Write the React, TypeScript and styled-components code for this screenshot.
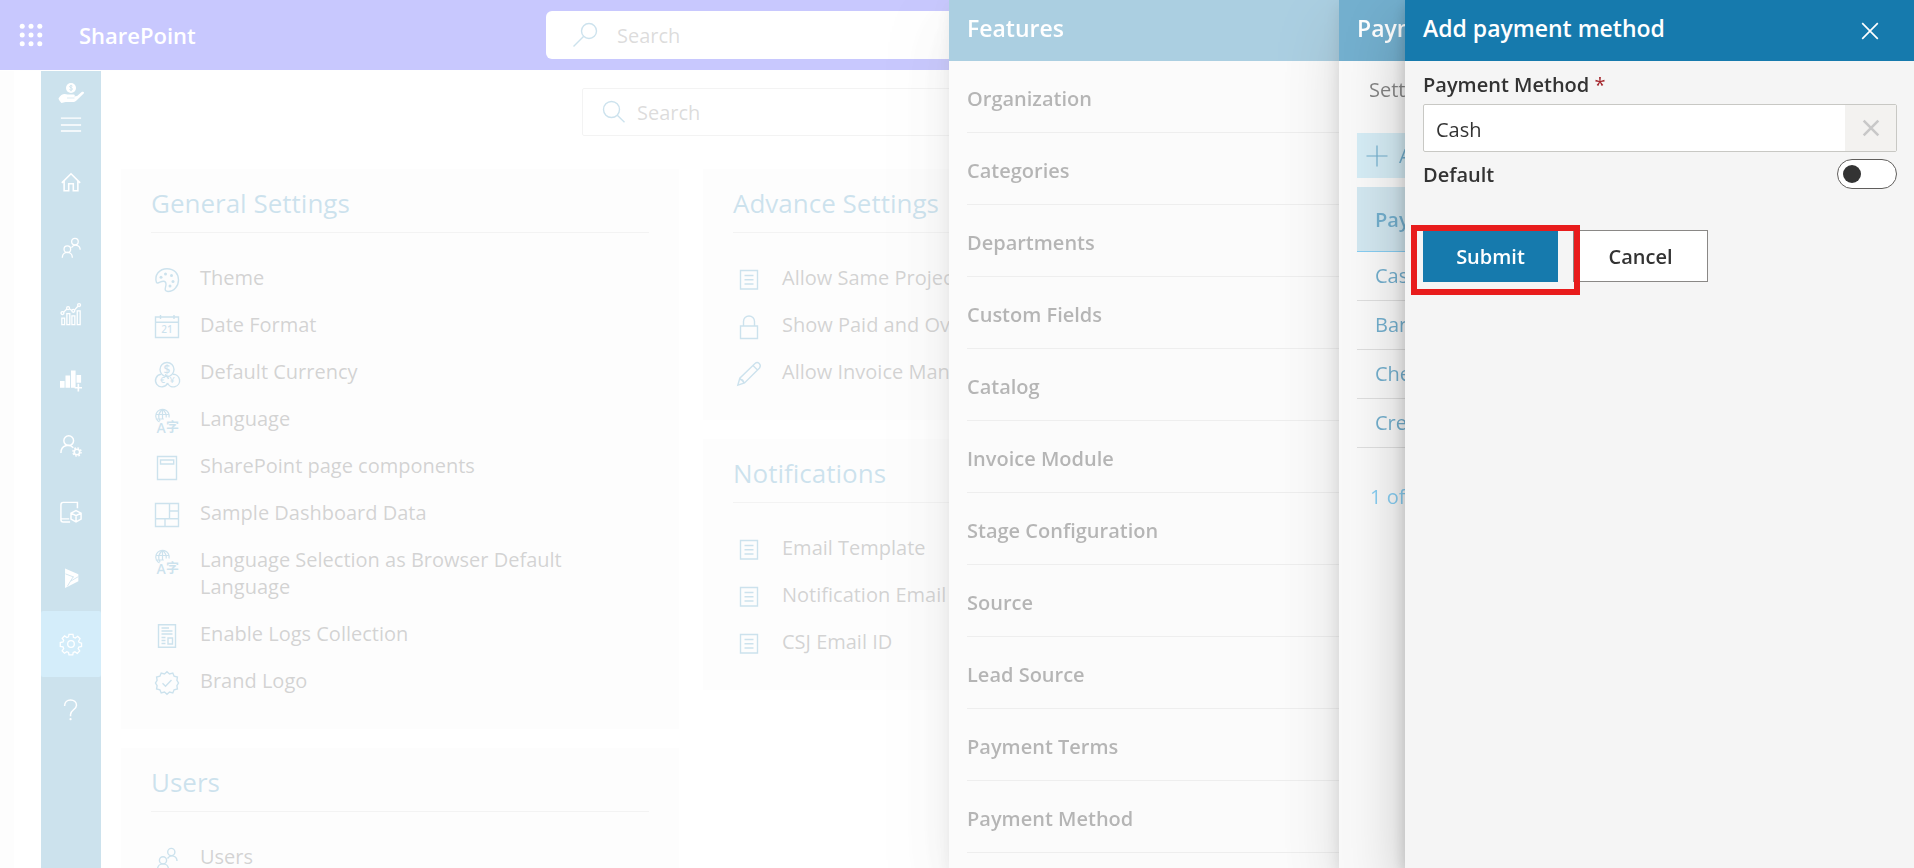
import React from "react";
import styled, { createGlobalStyle, css } from "styled-components";

const blue = "#167aad";
const sky = "#38ace8";
const ink = "#333333";
const surface = "#f5f5f5";

const GlobalStyle = createGlobalStyle`
  *, *::before, *::after { box-sizing: border-box; }
  body {
    margin: 0;
    background: #fff;
    color: ${ink};
    font-family: "Open Sans", "Noto Sans", "Liberation Sans", sans-serif;
    font-size: 20px;
    line-height: 27px;
  }
  button, input { font: inherit; color: inherit; }
  h1, h2, p, ul { margin: 0; padding: 0; }
  ul { list-style: none; }
  a { color: inherit; text-decoration: none; }
`;

/* ---------- icons ---------- */

const Svg = styled.svg<{ $size: number }>`
  display: block;
  flex: none;
  width: ${(p) => p.$size}px;
  height: ${(p) => p.$size}px;
  fill: none;
  stroke: currentColor;
  stroke-width: 1.4;
  overflow: visible;

  text {
    fill: currentColor;
    stroke: none;
    font-family: "Open Sans", "Noto Sans CJK SC", sans-serif;
    font-weight: 600;
  }
  .solid { fill: currentColor; stroke: none; }
`;

type IconName =
  | "waffle" | "hand" | "menu" | "home" | "people" | "trend" | "bars" | "userGear"
  | "product" | "dynamics" | "gear" | "help" | "searchLeft" | "searchRight"
  | "palette" | "calendar" | "currency" | "language" | "page" | "dashboard"
  | "logs" | "badge" | "note" | "lock" | "pencil" | "close" | "clear" | "plus";

const glyphs: Record<IconName, React.ReactNode> = {
  waffle: (
    <g className="solid">
      {[3.2, 12, 20.8].map((y) => [3.2, 12, 20.8].map((x) => <circle key={`${x}-${y}`} cx={x} cy={y} r="2.5" />))}
    </g>
  ),
  hand: (
    <>
      <circle className="solid" cx="12" cy="6" r="5" />
      <path d="M13.5 4.200c-.8-.8-2.900-.7-2.900.5 0 1.400 2.900.8 2.900 2.300 0 1.300-2.200 1.400-3.100.4M12 2.800v6.500" stroke="#167aad" strokeWidth=".9" />
      <path className="solid" d="M-.5 16.500C2 12.200 5 11.300 8.500 12.600h6c1.600 0 1.700 1.600.6 2l3-.6 4.600-3.900c1.600-1 3 .1 2 1.500l-7.500 7.200c-1 .9-2 1.300-3.500 1.300H6.500L2.500 21c-1.200-1-2.500-2.800-3-4.500z" />
      <path d="M8 16h7.500" stroke="#167aad" strokeWidth=".7" />
    </>
  ),
  menu: <path d="M1 4.500h22M1 12h22M1 18.500h22" strokeWidth="1.600" />,
  home: <path d="M2 13 12 3l10 10M4.500 11v10.500h5V14h5v7.500h5V11" strokeWidth="1.700" />,
  people: (
    <>
      <circle cx="16.300" cy="5" r="3.600" />
      <circle cx="8" cy="13.300" r="3.600" />
      <path d="M2.500 22.500c0-7.500 11-7.500 11 0M12.500 11.500c3-4.500 9.500-2.800 9.500 2.500" />
    </>
  ),
  trend: (
    <>
      <path d="M2 23.500v-7h3v7zM7.500 23.500V11.500h3.200v12zM13 23.500V14h3.200v9.500zM18.800 23.500V8.500H22v15z" />
      <path d="m4 10 3.500-3.500M10.500 6.500l2.500 1.700M16 7.500l3.500-4" />
      <circle cx="2.700" cy="11" r="1.600" />
      <circle cx="8.800" cy="5.600" r="1.600" />
      <circle cx="14.500" cy="8.500" r="1.600" />
      <circle cx="20.800" cy="2.200" r="1.600" />
    </>
  ),
  bars: (
    <>
      <path className="solid" d="M0 13h5v7.500H0zM6 7h5v13.500H6zM12 1.500h5v19h-5zM18 6.500h5V15h-5z" />
      <path d="M20 16v8.500M16 20.500h8" strokeWidth="1.800" />
    </>
  ),
  userGear: (
    <>
      <circle cx="9.500" cy="6.200" r="5.300" strokeWidth="1.600" />
      <path d="M1 19.500C1 10.500 10.500 9.500 14.500 14" strokeWidth="1.600" />
      <circle cx="18.500" cy="18.500" r="3" strokeWidth="1.800" />
      <circle cx="18.500" cy="18.500" r="4.500" strokeDasharray="1.800 1.734" strokeWidth="1.500" />
    </>
  ),
  product: (
    <>
      <path d="M19 8V1.500H3.500C2 1.500 1 2.500 1 4v16.500C1 22 2 23 3.500 23H11M1 19.500h9" strokeWidth="1.600" />
      <path d="m17.500 10.500 5.500 2.700v6.600l-5.500 3-5.500-3v-6.600zM12 13.200l5.500 2.800 5.500-2.800M17.500 16v6.500" strokeWidth="1.600" />
    </>
  ),
  dynamics: (
    <>
      <path className="solid" d="M5.500 1.500 20 8v7.500L5.500 23z" />
      <path d="m6 7.500 9 3.500M14.500 10.500 8 21M11.500 15.500 20 10.500" stroke="#167aad" strokeWidth=".9" />
    </>
  ),
  gear: (
    <>
      <circle cx="12" cy="12" r="3.600" />
      <path d="M9.800 1.500h4.400l.5 3.200 2 .8L19.300 3.600l2.600 2.600-1.600 2.800.7 1.300 2.500.8v3.600l-3 .6-.7 1.700 1.700 2.500-2.700 2.700-2.600-1.700-1.800.8-.5 2.600H9.800l-.5-2.700-1.900-.8-2.500 1.700-2.600-2.600 1.700-2.500-.7-1.800-3-.5V10.500l3-.7.7-1.700L2.400 5.700 5 3.200l2.500 1.700 1.800-.7z" />
    </>
  ),
  help: (
    <>
      <path d="M5 7.500C5 3.500 8 1 11.500 1S18 3.300 18 6.800c0 4.700-6.500 5.200-6.500 10v2" strokeWidth="1.600" />
      <circle className="solid" cx="11.500" cy="22" r="1.200" />
    </>
  ),
  searchLeft: (
    <>
      <circle cx="16" cy="8" r="7.500" />
      <path d="M10.500 13.500.5 23.500" />
    </>
  ),
  searchRight: (
    <>
      <circle cx="9.500" cy="9.500" r="8" />
      <path d="m15.300 15.300 7.200 7" />
    </>
  ),
  palette: (
    <>
      <path d="M1.500 14.500C-1 7 4.500.7 12 .7S23.500 6 23.500 12 19 23.500 13 23.500c-5-.5-1.800-4-2-7.500-.2-4-4-2.800-6-1.800-1.300.7-2.800 1.500-3.500.3z" />
      <g className="solid">
        <circle cx="6" cy="9.300" r="1.500" /><circle cx="10.500" cy="6" r="1.500" /><circle cx="16.500" cy="7.500" r="1.500" />
        <circle cx="18" cy="13.500" r="1.500" /><circle cx="15" cy="18" r="1.500" />
      </g>
    </>
  ),
  calendar: (
    <>
      <path d="M.5 2h23v20.500H.5zM.5 7.300h23M5.500 0v4M19 0v4" />
      <text x="12" y="18" fontSize="10" textAnchor="middle">21</text>
    </>
  ),
  currency: (
    <>
      <circle cx="12" cy="7.500" r="7" />
      <path d="M6 12.300a6.300 6.300 0 1 0 6.600 8.700M10 12.500a6.500 6.500 0 0 1 3.500 4.500M18 12.300A6.300 6.300 0 1 1 12.500 21" />
      <text x="12" y="12" fontSize="12" textAnchor="middle">$</text>
      <text x="7.500" y="21" fontSize="9" textAnchor="middle">€</text>
      <text x="17" y="21" fontSize="9" textAnchor="middle">¥</text>
    </>
  ),
  language: (
    <>
      <path d="M14 8.500A6.700 6.700 0 1 0 4.500 13M.8 5.500h13M.8 10h8M7.500.5v10M7.500.5C3 4 3 8 5 12M7.500.5c3 2 4 5 3.700 8" strokeWidth="1.200" />
      <text x="6.200" y="24" fontSize="14" textAnchor="middle">A</text>
      <text x="17.500" y="21.500" fontSize="13" textAnchor="middle">字</text>
    </>
  ),
  page: <path d="M2.500.5h19v23h-19zM5.500 4h13.200v4H5.500z" />,
  dashboard: <path d="M.5.5h23v23H.5zM.5 15.800h23M14.500.5v15.300M14.500 8h9M10 15.800v7.700" />,
  logs: (
    <>
      <path d="M3.500.7h17v22.600h-17z" />
      <path d="M6.500 4h7.500M6.500 7h11M6.500 10h11M6.500 13.500h4M6.500 16.500h4M6.500 19.500h4M13 14h4.500v6H13z" />
    </>
  ),
  badge: (
    <>
      <path d="m12 .7 2.500 2.300 3.300-1 1.300 3.200 3.300.8-.5 3.300 1.600 2.700-1.600 2.700.5 3.300-3.300.8-1.300 3.200-3.300-1L12 23.300 9.500 21l-3.300 1-1.300-3.200-3.300-.8.5-3.300L.5 12l1.600-2.700L1.600 6l3.300-.8L6.200 2l3.300 1z" />
      <path d="m7.500 12.300 3 3L16.500 9" />
    </>
  ),
  note: <path d="M3.500 2.500h17v18.500h-17zM7.500 7.500h9M7.500 11.700h9M7.500 16h9" />,
  lock: <path d="M3.500 11h17v12.500h-17zM6.500 11V6.500a5.500 5.500 0 0 1 11 0V11" />,
  pencil: <path d="m.8 23.200 2-7L18 1.500c3-2.500 6.800 1 4.500 4.500L7.500 21zM16 3.500l4.500 4.500M2.800 16.200l5 5M2.500 17.500c3-.5 4.500 1 4 4" />,
  close: <path d="m3.500 3.500 17 17M20.500 3.500l-17 17" strokeWidth="1.800" />,
  clear: <path d="m4 4 16 16M20 4 4 20" strokeWidth="2.800" />,
  plus: <path d="M12 1.500v21M1.500 12h21" strokeWidth="1.200" />,
};

const Icon = ({ name, size = 24 }: { name: IconName; size?: number }) => (
  <Svg viewBox="0 0 24 24" $size={size} aria-hidden="true">{glyphs[name]}</Svg>
);

/* ---------- site behind the panels ---------- */

const Site = styled.div`
  height: 100vh;
  min-width: 1200px;
  overflow: hidden;
  display: flex;
  flex-direction: column;
`;

const SuiteBar = styled.header`
  flex: none;
  display: grid;
  grid-template-columns: 1fr minmax(0, 822px) 1fr;
  align-items: center;
  height: 70px;
  margin-bottom: 1px;
  background: #0000fa;
  color: #fff;
`;

const Brand = styled.div`
  display: flex;
  align-items: center;
  gap: 36px;
  padding-left: 19px;
`;

const BrandName = styled.a`
  font-size: 22px;
  font-weight: 600;
`;

const IconButton = styled.button`
  display: flex;
  align-items: center;
  justify-content: center;
  padding: 0;
  border: 0;
  background: none;
  color: inherit;
`;

const SearchBox = styled.label<{ $outlined?: boolean }>`
  display: flex;
  align-items: center;
  width: 100%;
  height: 48px;
  background: #fff;
  color: ${blue};
  gap: ${(p) => (p.$outlined ? 11 : 20)}px;
  padding-left: ${(p) => (p.$outlined ? 19 : 27)}px;
  border: ${(p) => (p.$outlined ? "1px solid #c8c8c8" : "0")};
  border-radius: ${(p) => (p.$outlined ? 2 : 6)}px;

  input {
    flex: 1;
    min-width: 0;
    padding: 0;
    border: 0;
    outline: 0;
    background: none;
    color: ${ink};
  }
  input::placeholder { color: #605e5c; opacity: 1; }
`;

const Body = styled.div`
  flex: 1;
  min-height: 0;
  display: flex;
`;

const Gutter = styled.div`
  width: 14px;
  margin-right: 27px;
  background: ${surface};
`;

const SideNav = styled.nav`
  flex: none;
  width: 60px;
  display: flex;
  flex-direction: column;
  background: ${blue};
  color: #fff;
`;

const NavHead = styled.div`
  display: flex;
  flex-direction: column;
  align-items: center;
  gap: 8px;
  height: 78px;
  padding-top: 11px;
`;

const NavItem = styled.a<{ $active?: boolean }>`
  display: flex;
  align-items: center;
  justify-content: center;
  height: 66px;
  border-radius: 2px;
  ${(p) => p.$active && css`background: ${sky};`}
`;

const Main = styled.main`
  flex: 1;
  display: flex;
  flex-direction: column;
  gap: 33px;
  padding: 17px 71px 0 20px;
`;

const SearchRow = styled.div`
  align-self: center;
  width: 100%;
  max-width: 800px;
`;

const Columns = styled.div`
  display: grid;
  grid-template-columns: repeat(3, 1fr);
  gap: 24px;
  align-items: start;
`;

const Column = styled.div`
  display: flex;
  flex-direction: column;
  gap: 19px;
`;

const Card = styled.section`
  padding: 19px 30px 35px;
  background: ${surface};
`;

const CardTitle = styled.h2`
  height: 45px;
  border-bottom: 1px solid #c8c8c8;
  color: ${blue};
  font-size: 26px;
  font-weight: 400;
  line-height: 30px;
`;

const SettingList = styled.ul`
  display: flex;
  flex-direction: column;
  gap: 20px;
  padding-top: 31px;
`;

const Setting = styled.a`
  display: flex;
  gap: 18px;
`;

const SettingIcon = styled.span`
  display: flex;
  justify-content: center;
  flex: none;
  width: 31px;
  height: 27px;
  padding-top: 4px;
  color: ${blue};
`;

type Entry = [IconName, string];
const SettingsCard = ({ title, items }: { title: string; items: Entry[] }) => (
  <Card>
    <CardTitle>{title}</CardTitle>
    <SettingList>
      {items.map(([icon, text]) => (
        <li key={text}>
          <Setting href="#">
            <SettingIcon><Icon name={icon} /></SettingIcon>
            <span>{text}</span>
          </Setting>
        </li>
      ))}
    </SettingList>
  </Card>
);

const general: Entry[] = [
  ["palette", "Theme"],
  ["calendar", "Date Format"],
  ["currency", "Default Currency"],
  ["language", "Language"],
  ["page", "SharePoint page components"],
  ["dashboard", "Sample Dashboard Data"],
  ["language", "Language Selection as Browser Default Language"],
  ["logs", "Enable Logs Collection"],
  ["badge", "Brand Logo"],
];
const advance: Entry[] = [
  ["note", "Allow Same Project Name"],
  ["lock", "Show Paid and Overdue"],
  ["pencil", "Allow Invoice Manually"],
];
const notifications: Entry[] = [
  ["note", "Email Template"],
  ["note", "Notification Email"],
  ["note", "CSJ Email ID"],
];

const navItems: [IconName, string][] = [
  ["home", "Home"],
  ["people", "Contacts"],
  ["trend", "Dashboard"],
  ["bars", "Reports"],
  ["userGear", "User settings"],
  ["product", "Products"],
  ["dynamics", "Dynamics"],
  ["gear", "Settings"],
  ["help", "Help"],
];

/* ---------- side panels ---------- */

const Overlay = styled.div`
  position: fixed;
  inset: 0;
  display: flex;
  justify-content: flex-end;
  overflow: hidden;
  background: rgba(255, 255, 255, 0.4);
`;

const Panel = styled.section<{ $width: number }>`
  width: ${(p) => p.$width}px;
  max-width: 100%;
  background: ${surface};
  box-shadow: 0 26px 58px rgba(0, 0, 0, 0.22), 0 5px 14px rgba(0, 0, 0, 0.18);
`;

const PanelHeader = styled.header`
  display: flex;
  align-items: center;
  justify-content: space-between;
  height: 61px;
  padding: 0 33px 4px 18px;
  background: ${blue};
  color: #fff;

  h2 {
    padding-bottom: 2px;
    font-size: 23px;
    font-weight: 600;
    line-height: 30px;
    white-space: nowrap;
  }
  button { margin-top: 4px; }
`;

const FeatureList = styled.ul`
  padding-left: 18px;
`;

const Feature = styled.li`
  display: flex;
  align-items: center;
  height: 72px;
  padding-top: 4px;
  border-bottom: 1px solid #d0d0d0;
  font-weight: 600;
`;

const features = [
  "Organization", "Categories", "Departments", "Custom Fields", "Catalog", "Invoice Module",
  "Stage Configuration", "Source", "Lead Source", "Payment Terms", "Payment Method",
];

const ListBody = styled.div`
  display: flex;
  flex-direction: column;
  padding: 15px 18px;
`;

const Crumb = styled.p`
  padding-left: 12px;
  margin-bottom: 30px;
`;

const CommandBar = styled.div`
  height: 45px;
  margin-bottom: 9px;
  background: #b9dfee;
`;

const CommandButton = styled(IconButton)`
  gap: 10px;
  height: 45px;
  padding: 0 8px;
  color: ${blue};
`;

const MethodTable = styled.table`
  width: 100%;
  border-collapse: collapse;
  color: ${blue};

  th {
    height: 64px;
    padding: 2px 18px 0;
    background: #b5d8e7;
    border-bottom: 1px solid ${sky};
    font-weight: 600;
    text-align: left;
  }
  td {
    height: 49px;
    padding: 0 18px;
    border-bottom: 1px solid #c8c8c8;
  }
`;

const Pager = styled.p`
  padding: 35px 13px;
  color: ${sky};
`;

const Form = styled.form`
  display: flex;
  flex-direction: column;
  padding: 10px 17px 0 18px;
`;

const Label = styled.label`
  font-weight: 600;
  span { color: #a4262c; font-weight: 400; }
`;

const Field = styled.div`
  display: flex;
  height: 48px;
  margin: 6px 0 7px;
  border: 1px solid #c8c8c4;
  border-radius: 2px;
  background: #fff;

  input {
    flex: 1;
    min-width: 0;
    padding: 3px 12px 0;
    border: 0;
    outline: 0;
    background: none;
  }
  button {
    width: 51px;
    background: #f3f2f0;
    color: #c8c8c8;
  }
`;

const ToggleRow = styled.div`
  display: flex;
  justify-content: space-between;
  align-items: center;
  height: 30px;
  margin-bottom: 41px;
`;

const Toggle = styled.input`
  appearance: none;
  display: flex;
  align-items: center;
  width: 60px;
  height: 30px;
  margin: 0;
  padding: 0 5px;
  border: 1px solid #605e5c;
  border-radius: 15px;
  background: #fff;

  &::before {
    content: "";
    width: 18px;
    height: 18px;
    border-radius: 50%;
    background: ${ink};
  }
  &:checked { justify-content: flex-end; }
`;

const Actions = styled.div`
  position: relative;
  display: flex;
  gap: 15px;
`;

const ActionButton = styled.button<{ $primary?: boolean }>`
  width: 135px;
  height: 52px;
  padding: 0;
  border: 1px solid ${(p) => (p.$primary ? blue : "#8a8886")};
  background: ${(p) => (p.$primary ? blue : "#fff")};
  color: ${(p) => (p.$primary ? "#fff" : ink)};
  font-weight: 600;
`;

const Highlight = styled.span`
  position: absolute;
  top: -5px;
  left: -12px;
  width: 169px;
  height: 70px;
  border: 6px solid #e81c1c;
  pointer-events: none;
`;

export default function App() {
  return (
    <>
      <GlobalStyle />
      <Site>
        <SuiteBar>
          <Brand>
            <IconButton type="button" aria-label="App launcher"><Icon name="waffle" /></IconButton>
            <BrandName href="#">SharePoint</BrandName>
          </Brand>
          <SearchBox>
            <Icon name="searchLeft" />
            <input type="text" placeholder="Search" aria-label="Search this site" />
          </SearchBox>
        </SuiteBar>
        <Body>
          <Gutter />
          <SideNav>
            <NavHead>
              <Icon name="hand" />
              <IconButton type="button" aria-label="Menu"><Icon name="menu" size={22} /></IconButton>
            </NavHead>
            {navItems.map(([icon, label]) => (
              <NavItem key={label} href="#" aria-label={label} $active={icon === "gear"}>
                <Icon name={icon} size={22} />
              </NavItem>
            ))}
          </SideNav>
          <Main>
            <SearchRow>
              <SearchBox $outlined>
                <Icon name="searchRight" />
                <input type="text" placeholder="Search" aria-label="Search settings" />
              </SearchBox>
            </SearchRow>
            <Columns>
              <Column>
                <SettingsCard title="General Settings" items={general} />
                <SettingsCard title="Users" items={[["people", "Users"]]} />
              </Column>
              <Column>
                <SettingsCard title="Advance Settings" items={advance} />
                <SettingsCard title="Notifications" items={notifications} />
              </Column>
            </Columns>
          </Main>
        </Body>
      </Site>

      <Overlay>
        <Panel $width={965}>
          <PanelHeader><h2>Features</h2></PanelHeader>
          <FeatureList>
            {features.map((name) => <Feature key={name}>{name}</Feature>)}
          </FeatureList>
        </Panel>
      </Overlay>

      <Overlay>
        <Panel $width={575}>
          <PanelHeader><h2>Payment Method</h2></PanelHeader>
          <ListBody>
            <Crumb>Settings</Crumb>
            <CommandBar>
              <CommandButton type="button"><Icon name="plus" />Add</CommandButton>
            </CommandBar>
            <MethodTable>
              <thead><tr><th>Payment Method</th></tr></thead>
              <tbody>
                {["Cash", "Bank", "Cheque", "Credit Card"].map((m) => <tr key={m}><td>{m}</td></tr>)}
              </tbody>
            </MethodTable>
            <Pager>1 of 1</Pager>
          </ListBody>
        </Panel>
      </Overlay>

      <Overlay>
        <Panel $width={509} role="dialog" aria-labelledby="add-title">
          <PanelHeader>
            <h2 id="add-title">Add payment method</h2>
            <IconButton type="button" aria-label="Close"><Icon name="close" size={22} /></IconButton>
          </PanelHeader>
          <Form onSubmit={(e) => e.preventDefault()}>
            <Label htmlFor="method">Payment Method <span>*</span></Label>
            <Field>
              <input id="method" type="text" defaultValue="Cash" />
              <IconButton type="button" aria-label="Clear"><Icon name="clear" size={22} /></IconButton>
            </Field>
            <ToggleRow>
              <Label htmlFor="default">Default</Label>
              <Toggle id="default" type="checkbox" role="switch" />
            </ToggleRow>
            <Actions>
              <ActionButton type="submit" $primary>Submit</ActionButton>
              <ActionButton type="button">Cancel</ActionButton>
              <Highlight />
            </Actions>
          </Form>
        </Panel>
      </Overlay>
    </>
  );
}
